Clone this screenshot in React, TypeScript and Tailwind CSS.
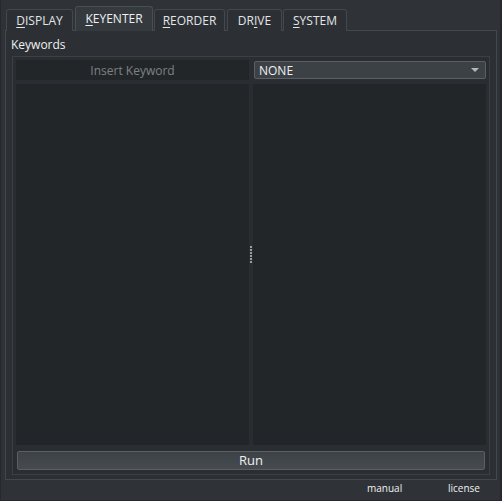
import { ReactNode } from "react";

function Tab({ label, u, active, w, ml }: { label: string; u: number; active?: boolean; w: string; ml: string }) {
  return (
    <div
      className={`${w} ${ml} flex items-center justify-center border border-b-0 rounded-t-[3px] text-[12px] ${
        active
          ? "h-[25px] bg-[#353a3f] border-[#4a4f54] text-[#eff0f1]"
          : "h-[22px] bg-[#2c3035] border-[#43484d] text-[#e3e5e7]"
      }`}
    >
      <span>
        {label.split("").map((c, i) => (
          <span key={i} className={i === u ? "underline underline-offset-2" : ""}>
            {c}
          </span>
        ))}
      </span>
    </div>
  );
}

function Pane({ children, className }: { children?: ReactNode; className?: string }) {
  return <div className={`bg-[#232629] ${className ?? ""}`}>{children}</div>;
}

export default function App() {
  return (
    <div
      className="w-[502px] h-[501px] bg-[#2f3338] border-l border-r-2 border-b border-[#25282c] flex flex-col text-[#eff0f1]"
      style={{ fontFamily: '"Open Sans", "Noto Sans", sans-serif' }}
    >
      {/* TABS */}
      <div className="flex items-end h-[31px] pt-[6px] relative z-10 -mb-px">
        <Tab label="DISPLAY" u={0} w="w-[67px]" ml="ml-[5px]" />
        <Tab label="KEYENTER" u={0} active w="w-[78px]" ml="ml-[2px]" />
        <Tab label="REORDER" u={0} w="w-[71px]" ml="ml-px" />
        <Tab label="DRIVE" u={2} w="w-[55px]" ml="ml-[2px]" />
        <Tab label="SYSTEM" u={0} w="w-[64px]" ml="ml-px" />
      </div>

      {/* PANEL */}
      <div className="ml-[4px] w-[492px] h-[450px] border border-[#43484d] bg-[#2c3035] flex flex-col px-[6px]">
        <div className="text-[12px] h-[25px] pt-[6px] -ml-px leading-[16px]">Keywords</div>
        <div className="flex-1 mb-[4px] border border-[#3b4045] bg-[#2a2e32] flex flex-col p-[3px]">
          <div className="flex h-[20px] gap-[5px]">
            <Pane className="w-[233px] h-[20px] flex items-center justify-center pt-[2px] text-[12px] text-[#7d8285]">
              Insert Keyword
            </Pane>
            <div className="flex-1 mt-px h-[18px] rounded-[2px] border border-[#5b6065] bg-[#3c4146] flex items-center justify-between pl-[4px] pr-[6px] text-[12px]">
              <span className="pt-px">NONE</span>
              <svg width="8" height="4" viewBox="0 0 8 4">
                <path d="M0 0h8L4 4z" fill="#b4b8bb" />
              </svg>
            </div>
          </div>
          <div className="flex mt-[4px] h-[361px]">
            <Pane className="w-[233px]" />
            <div className="w-[4px] bg-[#292d31] flex flex-col items-center justify-center gap-px pb-[20px]">
              {[0, 1, 2, 3, 4, 5].map((i) => (
                <div key={i} className="w-[2px] h-[2px] bg-[#9a9ea2]" />
              ))}
            </div>
            <Pane className="flex-1" />
          </div>
          <div className="mt-[6px] mx-px h-[19px] rounded-[2px] border border-[#5b6065] bg-gradient-to-b from-[#3d4247] to-[#464b50] flex items-center justify-center text-[13px]">
            Run
          </div>
        </div>
      </div>

      {/* FOOTER */}
      <div className="flex-1 relative text-[10px]">
        <span className="absolute left-[366px] top-[1px]">manual</span>
        <span className="absolute left-[447px] top-[1px]">license</span>
      </div>
    </div>
  );
}
